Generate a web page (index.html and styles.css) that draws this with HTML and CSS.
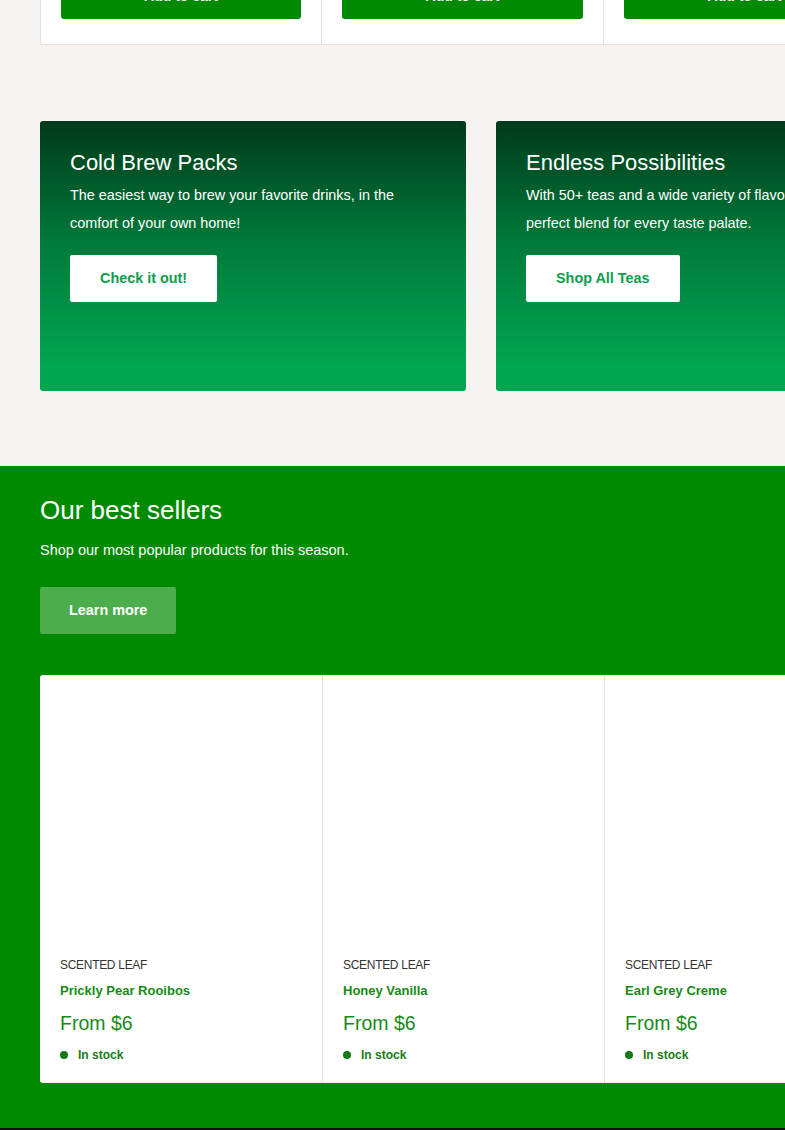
FILE: index.html
```html
<!DOCTYPE html>
<html lang="en">
<head>
    <meta charset="UTF-8">
    <meta name="viewport" content="width=device-width, initial-scale=1.0">
    <title>Scented Leaf</title>
    <link rel="stylesheet" href="styles.css">
</head>
<body>
    <!-- Tail of the product row above (scrolled past) -->
    <section class="card-strip">
        <div class="strip-card"><button class="add-btn">Add to cart</button></div>
        <div class="strip-card"><button class="add-btn">Add to cart</button></div>
        <div class="strip-card"><button class="add-btn">Add to cart</button></div>
    </section>

    <section class="promo-row">
        <div class="promo">
            <h2>Cold Brew Packs</h2>
            <p>The easiest way to brew your favorite drinks, in the comfort of your own home!</p>
            <a class="promo-btn" href="#">Check it out!</a>
        </div>
        <div class="promo">
            <h2>Endless Possibilities</h2>
            <p>With 50+ teas and a wide variety of flavors, find the perfect blend for every taste palate.</p>
            <a class="promo-btn" href="#">Shop All Teas</a>
        </div>
    </section>

    <section class="best-sellers">
        <h2>Our best sellers</h2>
        <p class="subtitle">Shop our most popular products for this season.</p>
        <a class="learn-btn" href="#">Learn more</a>

        <div class="product-row">
            <div class="product">
                <div class="product-image"></div>
                <div class="vendor">SCENTED LEAF</div>
                <a class="product-title" href="#">Prickly Pear Rooibos</a>
                <div class="price">From $6</div>
                <div class="stock"><span class="dot"></span>In stock</div>
            </div>
            <div class="product">
                <div class="product-image"></div>
                <div class="vendor">SCENTED LEAF</div>
                <a class="product-title" href="#">Honey Vanilla</a>
                <div class="price">From $6</div>
                <div class="stock"><span class="dot"></span>In stock</div>
            </div>
            <div class="product">
                <div class="product-image"></div>
                <div class="vendor">SCENTED LEAF</div>
                <a class="product-title" href="#">Earl Grey Creme</a>
                <div class="price">From $6</div>
                <div class="stock"><span class="dot"></span>In stock</div>
            </div>
        </div>
    </section>

    <footer class="footer"></footer>
</body>
</html>
```

FILE: styles.css
```css
body {
    margin: 0;
    background-color: #f6f3f1;
    font-family: "Liberation Sans", Arial, sans-serif;
    color: #333;
    overflow: hidden;
}

/* Product row tail at the top */
.card-strip {
    display: flex;
    padding: 0 40px;
    margin-top: -28px;
}
.strip-card {
    flex: 0 0 282px;
    box-sizing: border-box;
    background-color: #fff;
    border: 1px solid #e1e1e1;
    border-top: none;
    padding: 0 20px 25px;
}
.strip-card + .strip-card {
    border-left: none;
}
.add-btn {
    display: block;
    width: 100%;
    height: 47px;
    border: none;
    border-radius: 3px;
    background-color: #008a00;
    color: #fff;
    font-family: inherit;
    font-size: 14px;
    font-weight: bold;
}

/* Promo blocks */
.promo-row {
    display: flex;
    gap: 30px;
    padding: 0 40px;
    margin-top: 76px;
}
.promo {
    flex: 0 0 426px;
    height: 270px;
    box-sizing: border-box;
    padding: 28px 30px;
    border-radius: 3px;
    background: linear-gradient(to bottom, #003a1a 0%, #007a3a 45%, #00a650 90%);
    color: #fff;
}
.promo h2 {
    margin: 0 0 4px;
    font-size: 22px;
    font-weight: normal;
    line-height: 28px;
}
.promo p {
    margin: 0 0 18px;
    font-size: 14.4px;
    line-height: 28px;
    max-width: 340px;
}
.promo-btn {
    display: inline-block;
    padding: 0 30px;
    line-height: 47px;
    background-color: #fff;
    border-radius: 2px;
    color: #0d9e4f;
    font-size: 14.4px;
    font-weight: bold;
    text-decoration: none;
}

/* Best sellers */
.best-sellers {
    margin-top: 75px;
    background-color: #008a00;
    padding: 27px 40px 45px;
    color: #fff;
}
.best-sellers h2 {
    margin: 0;
    font-size: 26px;
    font-weight: normal;
    line-height: 34px;
}
.subtitle {
    margin: 13px 0 0;
    font-size: 14.5px;
    line-height: 20px;
}
.learn-btn {
    display: inline-block;
    margin-top: 27px;
    padding: 0 29px;
    line-height: 47px;
    background-color: #4cad4c;
    border-radius: 2px;
    color: #fff;
    font-size: 14.4px;
    font-weight: bold;
    text-decoration: none;
}
.product-row {
    display: flex;
    margin-top: 41px;
    margin-right: -40px;
}
.product {
    flex: 0 0 282px;
    box-sizing: border-box;
    background-color: #fff;
    border-left: 1px solid #e1e1e1;
    padding: 0 20px 20px;
    color: #333;
}
.product:first-child {
    border-left: none;
    border-radius: 3px 0 0 3px;
}
.product-image {
    height: 282px;
}
.vendor {
    font-size: 12px;
    line-height: 16px;
    letter-spacing: -0.3px;
}
.product-title {
    display: block;
    margin-top: 9px;
    color: #168a16;
    font-size: 13px;
    font-weight: bold;
    line-height: 18px;
    text-decoration: none;
}
.price {
    margin-top: 11px;
    color: #168a16;
    font-size: 19.5px;
    line-height: 24px;
}
.stock {
    display: flex;
    align-items: center;
    margin-top: 12px;
    color: #1a7a1a;
    font-size: 12px;
    font-weight: bold;
    line-height: 16px;
}
.dot {
    width: 8px;
    height: 8px;
    border-radius: 50%;
    background-color: #157a15;
    margin-right: 10px;
}

.footer {
    height: 40px;
    background-color: #111;
}
```
